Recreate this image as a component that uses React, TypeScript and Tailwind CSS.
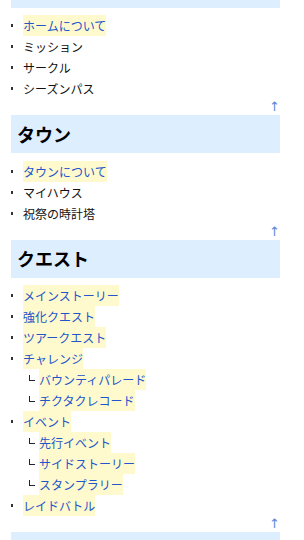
import React from "react";

type Item = { label: string; link?: boolean; sub?: { label: string }[] };

const sections: { title: string; items: Item[] }[] = [
  {
    title: "タウン",
    items: [
      { label: "タウンについて", link: true },
      { label: "マイハウス" },
      { label: "祝祭の時計塔" },
    ],
  },
  {
    title: "クエスト",
    items: [
      { label: "メインストーリー", link: true },
      { label: "強化クエスト", link: true },
      { label: "ツアークエスト", link: true },
      {
        label: "チャレンジ",
        link: true,
        sub: [{ label: "バウンティパレード" }, { label: "チクタクレコード" }],
      },
      {
        label: "イベント",
        link: true,
        sub: [{ label: "先行イベント" }, { label: "サイドストーリー" }, { label: "スタンプラリー" }],
      },
      { label: "レイドバトル", link: true },
    ],
  },
];

const firstItems: Item[] = [
  { label: "ホームについて", link: true },
  { label: "ミッション" },
  { label: "サークル" },
  { label: "シーズンパス" },
];

function Label({ label, link }: { label: string; link?: boolean }) {
  if (link) {
    return <span className="bg-[#fffacd] text-[#2255cc]">{label}</span>;
  }
  return <span className="text-[#111]">{label}</span>;
}

function List({ items }: { items: Item[] }) {
  return (
    <ul className="mt-[7.5px]">
      {items.map((it) => (
        <React.Fragment key={it.label}>
          <li className="flex items-center h-[21px] leading-[21px]">
            <span className="w-[2px] h-[3px] bg-[#333] mr-[10px]" />
            <Label label={it.label} link={it.link} />
          </li>
          {it.sub?.map((s) => (
            <li key={s.label} className="flex items-center h-[21px] leading-[21px] pl-[18px]">
              <span className="w-[6px] h-[6px] border-l border-b border-[#223] mr-[4px] relative top-[-2px]" />
              <Label label={s.label} link />
            </li>
          ))}
        </React.Fragment>
      ))}
    </ul>
  );
}

function Arrow() {
  return (
    <div className="h-[16px] leading-[16px] text-right pr-0 text-[13px] text-[#5b86d8] font-['DejaVu_Sans',sans-serif]">
      ↑
    </div>
  );
}

export default function App() {
  return (
    <div className="w-[304px] h-[540px] overflow-hidden bg-white font-['Noto_Sans_CJK_JP',sans-serif] text-[12px]">
      <div className="ml-[11px] w-[269px]">
        <div className="h-[7.5px] bg-[#ddeeff]" />
        <List items={firstItems} />
        <Arrow />
        {sections.map((s) => (
          <div key={s.title}>
            <div className="h-[38px] bg-[#ddeeff] flex items-center pl-[6px] text-[18px] font-bold text-black">
              {s.title}
            </div>
            <List items={s.items} />
            <Arrow />
          </div>
        ))}
        <div className="h-[38px] bg-[#ddeeff]" />
      </div>
    </div>
  );
}
